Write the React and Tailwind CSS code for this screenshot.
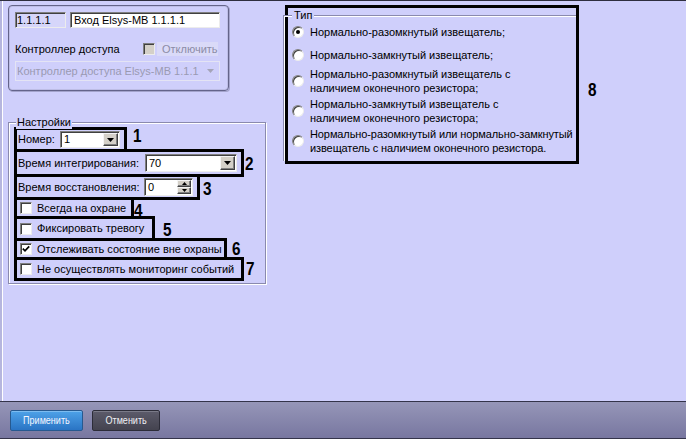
import React from "react";

const sunken =
  "border border-t-[#808080] border-l-[#808080] border-r-[#ececec] border-b-[#ececec] shadow-[inset_1px_1px_0_#404040]";
const raised =
  "bg-[#d4d0c8] border border-t-[#f4f4f4] border-l-[#f4f4f4] border-r-[#404040] border-b-[#404040] shadow-[inset_-1px_-1px_0_#808080]";

function Check({ checked, disabled }) {
  return (
    <span
      className={
        "relative w-[12px] h-[12px] shrink-0 " +
        sunken +
        (disabled ? " bg-[#d4d0c8]" : " bg-white")
      }
    >
      {checked && (
        <svg className="absolute left-[1px] top-[1px]" width="8" height="8" viewBox="0 0 8 8">
          <path d="M0.8 3.6 L3 5.8 L7.2 1.3" stroke="#000" strokeWidth="1.7" fill="none" />
        </svg>
      )}
    </span>
  );
}

function Radio({ on }) {
  return (
    <span
      className={
        "relative w-[12px] h-[12px] shrink-0 rounded-full bg-white " + sunken
      }
    >
      {on && (
        <span className="absolute left-[3px] top-[3px] w-[4px] h-[4px] rounded-full bg-black" />
      )}
    </span>
  );
}

function Arrow() {
  return (
    <svg width="7" height="4" viewBox="0 0 7 4">
      <path d="M0 0H7L3.5 4Z" fill="#000" />
    </svg>
  );
}

function Combo({ className, value }) {
  return (
    <div className={"flex items-stretch bg-white " + sunken + " " + className}>
      <span className="flex-1 pl-[3px] flex items-center leading-none">{value}</span>
      <span className={"m-[1px] w-[15px] flex items-center justify-center " + raised}>
        <Arrow />
      </span>
    </div>
  );
}

function Spin() {
  return (
    <div className={"w-[49px] h-[18px] flex items-stretch bg-white " + sunken}>
      <span className="flex-1 pl-[3px] flex items-center leading-none">0</span>
      <span className="m-[1px] w-[14px] flex flex-col">
        <span className={"flex-1 flex items-center justify-center " + raised}>
          <svg width="5" height="3" viewBox="0 0 5 3">
            <path d="M0 3H5L2.5 0Z" fill="#000" />
          </svg>
        </span>
        <span className={"flex-1 flex items-center justify-center " + raised}>
          <svg width="5" height="3" viewBox="0 0 5 3">
            <path d="M0 0H5L2.5 3Z" fill="#000" />
          </svg>
        </span>
      </span>
    </div>
  );
}

const num =
  "inline-block origin-left scale-x-[0.85] font-['Liberation_Sans',Arial,sans-serif] font-bold text-[18px] leading-[18px] text-black";

export default function App() {
  return (
    <div className="w-[686px] h-[439px] overflow-hidden bg-[#cfcffb] text-[11px] text-black font-['Liberation_Sans',Arial,sans-serif] flex flex-col">
      {/* main area */}
      <div className="h-[401px] border-t border-[#2e2e3e] flex">
        <div className="w-[2px] bg-[#b6b6de]" />
        <div className="w-[1px] bg-white" />
        <div className="flex pl-[5px] pt-[4px]">
          {/* left column */}
          <div className="w-[258px] flex flex-col">
            {/* top group */}
            <div className="w-[221px] h-[86px] rounded-[4px] border border-[#64648a] shadow-[inset_0_0_0_1px_#bdbde6,1px_1px_0_#a4a4cc] pt-[6px] pl-[6px]">
              <div className="flex gap-[4px] h-[16px]">
                <div className={"w-[51px] h-[16px] bg-[#d6d6fa] pl-[1px] flex items-center leading-none " + sunken}>
                  1.1.1.1
                </div>
                <div className={"w-[150px] h-[16px] bg-white pl-[3px] flex items-center leading-none " + sunken}>
                  Вход Elsys-MB 1.1.1.1
                </div>
              </div>
              <div className="flex items-center h-[14px] mt-[14px]">
                <span className="w-[128px] leading-none">Контроллер доступа</span>
                <Check disabled />
                <span className="ml-[2px] w-[61px] h-[14px] bg-[#dadaf8] pl-[5px] text-[#8c8ca6] flex items-center leading-none">
                  Отключить
                </span>
              </div>
              <div className="mt-[5px] w-[205px] h-[20px] border border-[#e4e4f4] flex items-center pl-[1px] text-[#9a9ab2]">
                <span className="flex-1 leading-none">Контроллер доступа Elsys-MB 1.1.1</span>
                <span className="mr-[5px] flex">
                  <svg width="7" height="4" viewBox="0 0 7 4">
                    <path d="M0 0H7L3.5 4Z" fill="#a4a4b8" />
                  </svg>
                </span>
              </div>
            </div>

            {/* Настройки group */}
            <div className="relative mt-[31px] w-[258px] h-[162px] border border-[#8a8aae] shadow-[inset_1px_1px_0_#fff,1px_1px_0_#fff] pt-[4px] pl-[5px]">
              <span className="absolute left-[7px] top-[-8px] px-[1px] bg-[#cfcffb] leading-[14px]">
                Настройки
              </span>

              {/* 1 */}
              <div className="flex items-start h-[25px]">
                <div className="w-[113px] h-full border-[3px] border-black flex items-center">
                  <span className="w-[43px] pl-[1px] leading-none">Номер:</span>
                  <Combo className="w-[60px] h-[17px]" value="1" />
                </div>
                <span className={num + " ml-[6px] mt-[0px]"}>1</span>
              </div>
              {/* 2 */}
              <div className="flex items-start h-[28px] -mt-[3px]">
                <div className="w-[230px] h-full border-[3px] border-black flex items-center">
                  <span className="w-[128px] pl-[1px] leading-none">Время интегрирования:</span>
                  <Combo className="w-[92px] h-[18px]" value="70" />
                </div>
                <span className={num + " ml-[1px] mt-[6px]"}>2</span>
              </div>
              {/* 3 */}
              <div className="flex items-start h-[26px] -mt-[3px]">
                <div className="w-[186px] h-full border-[3px] border-black flex items-center">
                  <span className="w-[127px] pl-[1px] leading-none">Время восстановления:</span>
                  <Spin />
                </div>
                <span className={num + " ml-[3px] mt-[6px]"}>3</span>
              </div>
              {/* 4 */}
              <div className="flex items-start h-[22px] -mt-[3px]">
                <div className="w-[120px] h-full border-[3px] border-black flex items-center pl-[3px] gap-[5px]">
                  <Check />
                  <span className="leading-none">Всегда на охране</span>
                </div>
                <span className={num + " ml-[0px] mt-[5px]"}>4</span>
              </div>
              {/* 5 */}
              <div className="flex items-start h-[25px] -mt-[3px]">
                <div className="w-[141px] h-full border-[3px] border-black flex items-center pl-[3px] gap-[5px]">
                  <Check />
                  <span className="leading-none">Фиксировать тревогу</span>
                </div>
                <span className={num + " ml-[8px] mt-[5px]"}>5</span>
              </div>
              {/* 6 */}
              <div className="flex items-start h-[22px] -mt-[3px]">
                <div className="w-[213px] h-full border-[3px] border-black flex items-center pl-[3px] gap-[5px]">
                  <Check checked />
                  <span className="leading-none">Отслеживать состояние вне охраны</span>
                </div>
                <span className={num + " ml-[5px] mt-[2px]"}>6</span>
              </div>
              {/* 7 */}
              <div className="flex items-start h-[24px] -mt-[3px]">
                <div className="w-[230px] h-full border-[3px] border-black flex items-center pl-[3px] gap-[5px]">
                  <Check />
                  <span className="leading-none">Не осуществлять мониторинг событий</span>
                </div>
                <span className={num + " ml-[2px] mt-[3px]"}>7</span>
              </div>
            </div>
          </div>

          {/* right column: Тип */}
          <div className="ml-[19px] flex items-start">
            <div className="w-[294px] h-[159px] border-[3px] border-black">
              <div className="relative ml-[-5px] mt-[7px] w-[293px] h-[146px] border-t border-l border-[#8a8aae] shadow-[inset_1px_1px_0_#fff] pl-[8px] flex flex-col">
                <span className="absolute left-[8px] top-[-8px] px-[2px] bg-[#cfcffb] leading-[14px]">
                  Тип
                </span>
                <div className="flex items-center gap-[6px] mt-[9px] whitespace-nowrap">
                  <Radio on />
                  <span className="leading-[14px]">Нормально-разомкнутый извещатель;</span>
                </div>
                <div className="flex items-center gap-[6px] mt-[9px] whitespace-nowrap">
                  <Radio />
                  <span className="leading-[14px]">Нормально-замкнутый извещатель;</span>
                </div>
                <div className="flex items-center gap-[6px] mt-[5px] whitespace-nowrap">
                  <Radio />
                  <span className="leading-[14px]">
                    Нормально-разомкнутый извещатель с<br />
                    наличием оконечного резистора;
                  </span>
                </div>
                <div className="flex items-center gap-[6px] mt-[2px] whitespace-nowrap">
                  <Radio />
                  <span className="leading-[14px]">
                    Нормально-замкнутый извещатель с<br />
                    наличием оконечного резистора;
                  </span>
                </div>
                <div className="flex items-center gap-[6px] mt-[2px] whitespace-nowrap">
                  <Radio />
                  <span className="leading-[14px] tracking-[-0.1px]">
                    Нормально-разомкнутый или нормально-замкнутый<br />
                    извещатель с наличием оконечного резистора.
                  </span>
                </div>
              </div>
            </div>
            <span className={num + " ml-[9px] mt-[76px]"}>8</span>
          </div>
        </div>
      </div>

      {/* bottom bar */}
      <div className="h-[38px] border-t border-b border-[#34344a] bg-gradient-to-b from-[#9696b8] to-[#7877a0] flex items-start pl-[10px] pt-[8px] gap-[9px]">
        <button className="w-[73px] h-[21px] rounded-[2px] border border-[#27598f] bg-gradient-to-b from-[#4ea2e8] to-[#2a74c4] text-[#f4f6ff] text-[11px] leading-none shadow-[inset_0_1px_0_#7cbcf0] flex items-center justify-center">
          <span className="inline-block scale-x-[0.82] whitespace-nowrap">Применить</span>
        </button>
        <button className="w-[68px] h-[21px] rounded-[2px] border border-[#2c2c38] bg-gradient-to-b from-[#5c5b6b] to-[#44434f] text-[#f0f0f4] text-[11px] leading-none shadow-[inset_0_1px_0_#7a7a88] flex items-center justify-center">
          <span className="inline-block scale-x-[0.82] whitespace-nowrap">Отменить</span>
        </button>
      </div>
    </div>
  );
}
